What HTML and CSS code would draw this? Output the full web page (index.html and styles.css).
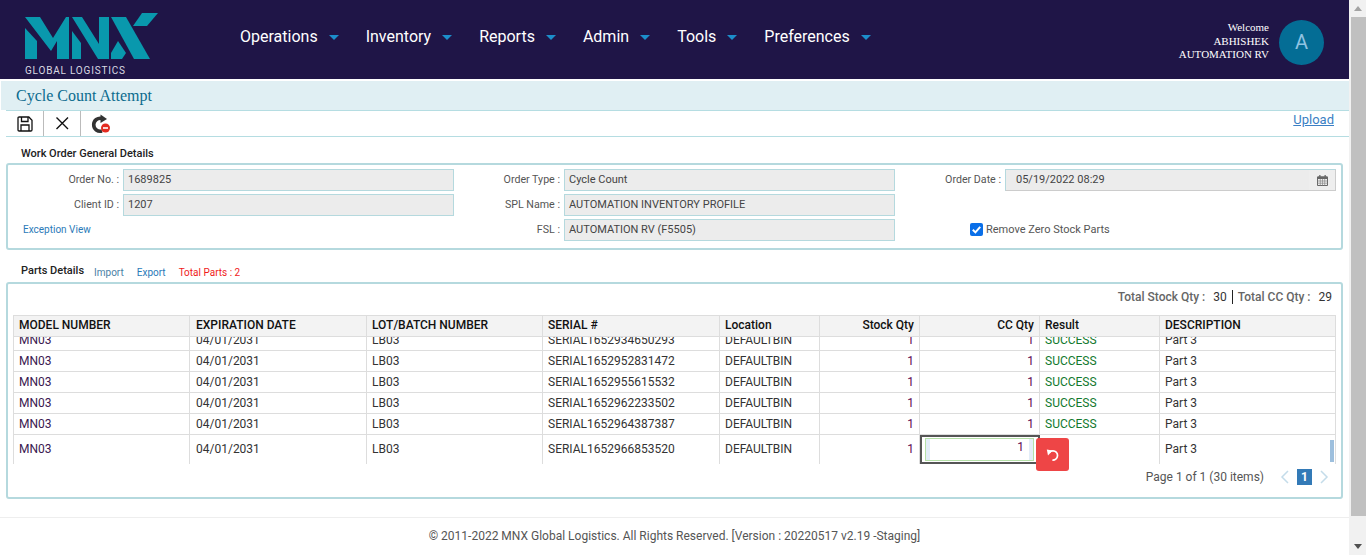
FILE: index.html
```html
<!DOCTYPE html>
<html>
<head>
    <meta charset="utf-8">
    <title>Cycle Count Attempt</title>
    <link rel="stylesheet" href="styles.css">
</head>
<body>
    <div class="page">
        <header class="topbar">
            <div class="logo">
                <svg class="logo-mark" viewBox="0 0 150 44" width="150" height="44">
                    <g fill="#0998ad">
                        <polygon points="5,8 20,8 33,29 46,8 49,8 49,50 37,50 37,32 31,42"/>
                        <polygon points="5,19 17,32 17,50 5,50"/>
                        <polygon points="52,8 62,8 79,35 79,8 89,8 89,50 78,50"/>
                        <polygon points="52,22 61,34 61,50 52,50"/>
                        <polygon points="91,8 106,8 130,50 114,50"/>
                        <polygon points="122,4 138,4 127,17 113,17"/>
                        <polygon points="98,32 106,44 102,50 91,50 91,44"/>
                    </g>
                </svg>
                <div class="logo-text">GLOBAL LOGISTICS</div>
            </div>
            <nav class="menu">
                <a class="menu-item">Operations<span class="caret"></span></a>
                <a class="menu-item">Inventory<span class="caret"></span></a>
                <a class="menu-item">Reports<span class="caret"></span></a>
                <a class="menu-item">Admin<span class="caret"></span></a>
                <a class="menu-item">Tools<span class="caret"></span></a>
                <a class="menu-item">Preferences<span class="caret"></span></a>
            </nav>
            <div class="user">
                <div class="user-text">Welcome<br>ABHISHEK<br>AUTOMATION RV</div>
                <div class="avatar">A</div>
            </div>
        </header>

        <div class="title-bar">Cycle Count Attempt</div>

        <div class="toolbar">
            <button class="tool tool-first" type="button">
                <svg viewBox="0 0 16 16" width="16" height="16" fill="none" stroke="#111" stroke-width="1.3">
                    <path d="M1 2.2 Q1 1 2.2 1 H11.8 L15 4.2 V13.8 Q15 15 13.8 15 H2.2 Q1 15 1 13.8 Z"/>
                    <path d="M4.5 1 V5.5 H11 V1"/>
                    <path d="M4 15 V9 H12 V15"/>
                </svg>
            </button>
            <button class="tool tool-close" type="button">
                <svg viewBox="0 0 14 14" width="14" height="14" fill="none" stroke="#111" stroke-width="1.4">
                    <path d="M1.5 1.5 L13 13 M13 1.5 L1.5 13"/>
                </svg>
            </button>
            <button class="tool tool-last" type="button">
                <svg viewBox="0 0 20 20" width="20" height="20">
                    <path d="M11 4.5 A6.5 6.5 0 1 0 11 17" fill="none" stroke="#333" stroke-width="3.6"/>
                    <polygon points="9.5,0.5 16,5 9.5,9" fill="#333"/>
                    <circle cx="14.5" cy="14" r="4.5" fill="#e32b20"/>
                    <rect x="12" y="13.2" width="5" height="1.6" fill="#fff"/>
                </svg>
            </button>
            <a class="upload">Upload</a>
        </div>

        <h4 class="section-title section-general">Work Order General Details</h4>
        <section class="panel panel-general">
            <div class="form-col col-one">
                <div class="field"><label>Order No. :</label><div class="input">1689825</div></div>
                <div class="field"><label>Client ID :</label><div class="input">1207</div></div>
                <a class="exception">Exception View</a>
            </div>
            <div class="form-col col-two">
                <div class="field"><label>Order Type :</label><div class="input">Cycle Count</div></div>
                <div class="field"><label>SPL Name :</label><div class="input">AUTOMATION INVENTORY PROFILE</div></div>
                <div class="field"><label>FSL :</label><div class="input">AUTOMATION RV (F5505)</div></div>
            </div>
            <div class="form-col col-three">
                <div class="field">
                    <label>Order Date :</label>
                    <div class="input date-input">
                        <span class="date-value">05/19/2022 08:29</span>
                        <span class="date-btn">
                            <svg viewBox="0 0 11 11" width="11" height="11">
                                <path d="M0.5 2 H10.5 V10.5 H0.5 Z" fill="none" stroke="#666"/>
                                <rect x="0.5" y="1.5" width="10" height="2.5" fill="#666"/>
                                <rect x="2.2" y="0" width="1.3" height="2" fill="#666"/>
                                <rect x="7.5" y="0" width="1.3" height="2" fill="#666"/>
                                <path d="M0.5 6 H10.5 M0.5 8.2 H10.5 M3.3 4 V10.5 M5.5 4 V10.5 M7.7 4 V10.5" stroke="#888" stroke-width="0.7"/>
                            </svg>
                        </span>
                    </div>
                </div>
                <div class="check-row">
                    <span class="check">
                        <svg viewBox="0 0 13 13" width="13" height="13">
                            <path d="M2.8 6.8 L5.4 9.4 L10.2 3.8" fill="none" stroke="#fff" stroke-width="2"/>
                        </svg>
                    </span>
                    <span>Remove Zero Stock Parts</span>
                </div>
            </div>
        </section>

        <div class="parts-head">
            <h4 class="section-title">Parts Details</h4>
            <a class="import-link">Import</a>
            <a class="export-link">Export</a>
            <span class="total-parts">Total Parts : 2</span>
        </div>

        <section class="panel panel-parts">
            <div class="totals">
                <span>Total Stock Qty :</span><b>30</b>
                <i class="totals-sep"></i>
                <span>Total CC Qty :</span><b>29</b>
            </div>
            <div class="grid">
                <table class="grid-table">
                    <colgroup>
                        <col class="c-model"><col class="c-exp"><col class="c-lot"><col class="c-serial"><col class="c-loc">
                        <col class="c-stock"><col class="c-cc"><col class="c-result"><col class="c-desc">
                    </colgroup>
                    <thead>
                        <tr>
                            <th>MODEL NUMBER</th><th>EXPIRATION DATE</th><th>LOT/BATCH NUMBER</th><th>SERIAL #</th><th>Location</th>
                            <th class="num">Stock Qty</th><th class="num">CC Qty</th><th>Result</th><th>DESCRIPTION</th>
                        </tr>
                    </thead>
                </table>
                <div class="grid-body">
                    <table class="grid-table body-table">
                        <colgroup>
                            <col class="c-model"><col class="c-exp"><col class="c-lot"><col class="c-serial"><col class="c-loc">
                            <col class="c-stock"><col class="c-cc"><col class="c-result"><col class="c-desc">
                        </colgroup>
                        <tbody>
                            <tr><td class="model">MN03</td><td>04/01/2031</td><td>LB03</td><td>SERIAL1652934650293</td><td>DEFAULTBIN</td><td class="num qty">1</td><td class="num qty">1</td><td class="ok">SUCCESS</td><td>Part 3</td></tr>
                            <tr><td class="model">MN03</td><td>04/01/2031</td><td>LB03</td><td>SERIAL1652952831472</td><td>DEFAULTBIN</td><td class="num qty">1</td><td class="num qty">1</td><td class="ok">SUCCESS</td><td>Part 3</td></tr>
                            <tr><td class="model">MN03</td><td>04/01/2031</td><td>LB03</td><td>SERIAL1652955615532</td><td>DEFAULTBIN</td><td class="num qty">1</td><td class="num qty">1</td><td class="ok">SUCCESS</td><td>Part 3</td></tr>
                            <tr><td class="model">MN03</td><td>04/01/2031</td><td>LB03</td><td>SERIAL1652962233502</td><td>DEFAULTBIN</td><td class="num qty">1</td><td class="num qty">1</td><td class="ok">SUCCESS</td><td>Part 3</td></tr>
                            <tr><td class="model">MN03</td><td>04/01/2031</td><td>LB03</td><td>SERIAL1652964387387</td><td>DEFAULTBIN</td><td class="num qty">1</td><td class="num qty">1</td><td class="ok">SUCCESS</td><td>Part 3</td></tr>
                            <tr class="edit-row"><td class="model">MN03</td><td>04/01/2031</td><td>LB03</td><td>SERIAL1652966853520</td><td>DEFAULTBIN</td><td class="num qty">1</td><td class="edit-cell"><div class="edit-input"><span class="qty">1</span></div></td><td></td><td>Part 3</td></tr>
                        </tbody>
                    </table>
                </div>
                <div class="grid-thumb"></div>
                <button class="undo" type="button">
                    <svg viewBox="0 0 14 14" width="14" height="14" fill="none" stroke="#fff" stroke-width="1.7">
                        <path d="M3.4 4.4 C5.2 2.6 8.4 2.4 10.2 4.2 C12.2 6.2 11.9 9.5 9.8 11.2 C8.8 12 7.6 12.3 6.4 12.2"/>
                        <polygon points="0.8,1.6 6.6,2.4 2,7.4" fill="#fff" stroke="none"/>
                    </svg>
                </button>
            </div>
            <div class="pager">
                <span class="pager-info">Page 1 of 1 (30 items)</span>
                <svg class="pager-arrow" viewBox="0 0 9 14" width="9" height="14" fill="none" stroke="#c4dcea" stroke-width="1.5"><path d="M8 1 L2 7 L8 13"/></svg>
                <span class="pager-num">1</span>
                <svg class="pager-arrow" viewBox="0 0 9 14" width="9" height="14" fill="none" stroke="#c4dcea" stroke-width="1.5"><path d="M1 1 L7 7 L1 13"/></svg>
            </div>
        </section>

        <footer class="footer">© 2011-2022 MNX Global Logistics. All Rights Reserved. [Version : 20220517 v2.19 -Staging]</footer>
    </div>

    <div class="scrollbar">
        <span class="scroll-up"></span>
        <span class="scroll-thumb"></span>
        <span class="scroll-down"></span>
    </div>
</body>
</html>
```

FILE: styles.css
```css
html, body {
    height: 100%;
    margin: 0;
}

body {
    display: flex;
    overflow: hidden;
    font-family: "Roboto", "Liberation Sans", sans-serif;
    font-size: 12px;
    color: #333;
    background-color: #fff;
}

.page {
    flex: 1;
    min-width: 0;
}

/* top bar */
.topbar {
    display: flex;
    height: 79px;
    background-color: #1f1547;
}

.logo {
    width: 240px;
    flex: none;
}

.logo-mark {
    display: block;
    margin: 9px 0 0 20px;
    overflow: visible;
}

.logo-text {
    margin: 12px 0 0 25px;
    font-size: 10px;
    letter-spacing: 0.8px;
    line-height: 12px;
    color: #d9d9e2;
}

.menu {
    display: flex;
    gap: 27px;
    padding-top: 27px;
}

.menu-item {
    font-size: 16px;
    line-height: 19px;
    color: #fff;
}

.caret {
    display: inline-block;
    margin-left: 11px;
    vertical-align: 2px;
    border-top: 5px solid #1c8ecb;
    border-left: 5px solid transparent;
    border-right: 5px solid transparent;
}

.user {
    display: flex;
    margin-left: auto;
    padding: 20px 25px 0 0;
}

.user-text {
    padding-top: 1px;
    font-family: "Liberation Serif", serif;
    font-size: 11px;
    line-height: 13.5px;
    text-align: right;
    color: #fff;
}

.avatar {
    width: 45px;
    height: 45px;
    margin-left: 10px;
    border-radius: 50%;
    background-color: #046d95;
    font-size: 20px;
    line-height: 45px;
    text-align: center;
    color: #8fc3e2;
}

/* title + toolbar */
.title-bar {
    height: 29px;
    margin: 2px 0 0 1px;
    padding-left: 15px;
    background-color: #e0eff3;
    font-family: "Liberation Serif", serif;
    font-size: 16px;
    line-height: 29px;
    color: #0b6b8e;
}

.toolbar {
    display: flex;
    height: 25px;
    margin-left: 6px;
    border-top: 1px solid #b5dde2;
    border-bottom: 1px solid #b5dde2;
}

.tool {
    display: flex;
    align-items: center;
    justify-content: center;
    width: 37px;
    padding: 0;
    border: 0;
    border-right: 1px solid #bbb;
    background: none;
}

.tool-first {
    width: 38px;
}

.tool-close {
    padding-bottom: 2px;
}

.tool-last {
    border-right: 0;
    width: 40px;
}

.upload {
    margin: 0 15px 0 auto;
    font-size: 13px;
    line-height: 17px;
    color: #3b7fc4;
    text-decoration: underline;
}

/* panels */
.section-title {
    margin: 0;
    font-size: 11px;
    font-weight: 500;
    line-height: 13px;
    color: #222;
}

.section-general {
    margin: 10px 0 0 21px;
    padding-bottom: 3px;
}

.panel {
    margin: 0 6px;
    border: 2px solid #b5d9de;
    border-radius: 3px;
}

.panel-general {
    display: flex;
    height: 79px;
    padding-top: 4px;
}

.form-col {
    display: flex;
    flex-direction: column;
    gap: 3px;
}

.col-one {
    width: 446px;
}

.col-two {
    width: 441px;
}

.col-three {
    flex: 1;
}

.field {
    display: flex;
    align-items: center;
    height: 22px;
}

.field label {
    flex: none;
    padding: 0 4px 1px 0;
    font-size: 10.67px;
    text-align: right;
    color: #555;
}

.col-one label {
    width: 111px;
}

.col-two label {
    width: 106px;
}

.col-three label {
    width: 106px;
}

.input {
    box-sizing: border-box;
    width: 331px;
    height: 22px;
    padding-left: 4px;
    border: 1px solid #b5d9de;
    background-color: #ececec;
    font-size: 11px;
    line-height: 20px;
    color: #444;
}

.date-input {
    display: flex;
    justify-content: space-between;
    flex: 1;
    margin-right: 5px;
    padding-left: 10px;
    border-color: #b5d9de #ccc #ccc #b5d9de;
}

.date-btn {
    display: flex;
    align-items: center;
    justify-content: center;
    width: 26px;
    background-color: #eee;
}

.exception {
    margin: 4px 0 0 15px;
    font-size: 10px;
    line-height: 13px;
    color: #2a7ab8;
}

.check-row {
    display: flex;
    align-items: center;
    gap: 3px;
    margin: 29px 0 0 75px;
    font-size: 11px;
    line-height: 13px;
    color: #555;
}

.check {
    display: block;
    width: 13px;
    height: 13px;
    border-radius: 2px;
    background-color: #0a6fe8;
}

.check svg {
    display: block;
}

.parts-head {
    display: flex;
    align-items: baseline;
    height: 18px;
    margin: 14px 0 0 21px;
}

.import-link,
.export-link,
.total-parts {
    position: relative;
    top: 2px;
    font-size: 10px;
    line-height: 13px;
}

.import-link {
    margin-left: 10px;
    color: #4a7fa5;
}

.export-link {
    margin-left: 13px;
    color: #2a7ab8;
}

.total-parts {
    margin-left: 13px;
    color: #f01b1b;
}

.panel-parts {
    height: 213px;
    padding: 0 5px;
}

.totals {
    display: flex;
    align-items: center;
    justify-content: flex-end;
    height: 26px;
    margin-bottom: 5px;
    padding-right: 4px;
    font-size: 12px;
    font-weight: 500;
    color: #666;
}

.totals b {
    margin-left: 8px;
    font-weight: 400;
    color: #333;
}

.totals-sep {
    width: 1px;
    height: 14px;
    margin: 0 5px 0 5px;
    background-color: #222;
}

/* grid */
.grid {
    position: relative;
    width: 1323px;
}

.grid-table {
    width: 1322px;
    table-layout: fixed;
    border-collapse: collapse;
}

.c-model { width: 176px; }
.c-exp { width: 177px; }
.c-lot { width: 176px; }
.c-serial { width: 177px; }
.c-loc { width: 100px; }
.c-stock { width: 100px; }
.c-cc { width: 120px; }
.c-result { width: 120px; }
.c-desc { width: 176px; }

.grid-table th {
    height: 18px;
    padding: 0 5px 2px;
    border: 1px solid #ddd;
    background-color: #f3f3f3;
    font-size: 12px;
    font-weight: 500;
    line-height: 18px;
    text-align: left;
    color: #111;
}

.grid-table th:nth-child(2),
.grid-table td:nth-child(2) {
    padding-left: 6px;
}

.grid-table th.num,
.grid-table td.num {
    text-align: right;
}

.grid-body {
    height: 128px;
    overflow: hidden;
}

.body-table {
    margin-top: -7px;
}

.body-table td {
    height: 20px;
    padding: 0 5px;
    border: 1px solid #ddd;
    border-top: 0;
    font-size: 12px;
    line-height: 14px;
    color: #333;
    white-space: nowrap;
}

.body-table .model {
    color: #3a1850;
}

.body-table .qty {
    color: #600a50;
}

.body-table .ok {
    color: #12792d;
}

.body-table .edit-row td {
    height: 27px;
    padding-bottom: 2px;
    border-bottom: 0;
}

.body-table .edit-row .edit-cell {
    height: 23px;
    padding: 3px 5px;
    outline: 2px solid #555;
    outline-offset: -2px;
}

.edit-input {
    box-sizing: border-box;
    height: 23px;
    padding: 1px 9px 4px 0;
    border: 1px solid #b5e0a8;
    box-shadow: inset 4px 0 #e3edf8, inset -4px 0 #e3edf8;
    text-align: right;
}

.grid-thumb {
    position: absolute;
    top: 125px;
    right: 2px;
    width: 4px;
    height: 22px;
    background-color: #9dbfdd;
}

.undo {
    position: absolute;
    top: 123px;
    left: 1023px;
    display: flex;
    align-items: center;
    justify-content: center;
    width: 33px;
    height: 33px;
    padding: 0;
    border: 0;
    border-radius: 3px;
    background-color: #ee4546;
}

.pager {
    display: flex;
    align-items: center;
    justify-content: flex-end;
    height: 24px;
    padding: 0 7px 0 0;
    font-size: 12px;
    color: #555;
}

.pager-info {
    margin-right: 16px;
}

.pager-num {
    width: 15px;
    height: 16px;
    margin: 0 8px;
    background-color: #337ab7;
    line-height: 16px;
    font-weight: 700;
    text-align: center;
    color: #fff;
}

/* footer */
.footer {
    margin-top: 18px;
    padding-top: 11px;
    border-top: 1px solid #eee;
    font-size: 12px;
    line-height: 14px;
    text-align: center;
    color: #555;
}

/* scrollbar */
.scrollbar {
    display: flex;
    flex-direction: column;
    flex: none;
    width: 17px;
    background-color: #f1f1f1;
}

.scroll-up,
.scroll-down {
    display: block;
    width: 0;
    margin: 6px auto;
    border-left: 4px solid transparent;
    border-right: 4px solid transparent;
}

.scroll-up {
    border-bottom: 5px solid #a3a3a3;
}

.scroll-down {
    border-top: 5px solid #505050;
}

.scroll-thumb {
    flex: 1;
    margin: 0 0 22px 2px;
    background-color: #c0c0c0;
}
```
